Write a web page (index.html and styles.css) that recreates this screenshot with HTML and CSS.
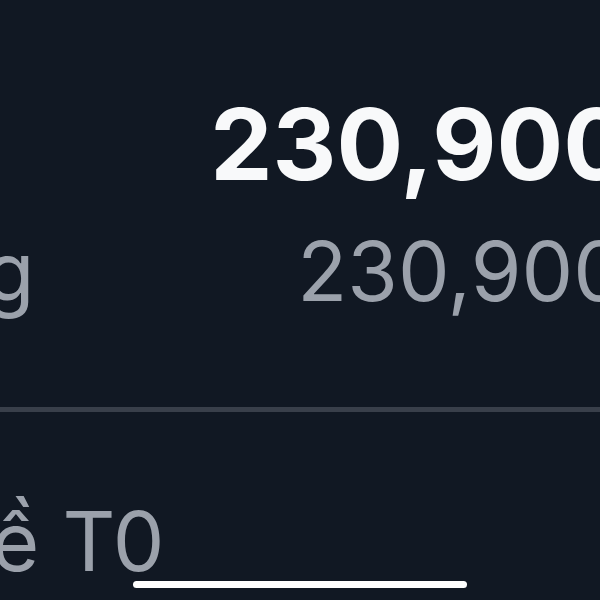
FILE: index.html
```html
<!DOCTYPE html>
<html lang="vi">
<head>
<meta charset="utf-8">
<link rel="stylesheet" href="styles.css">
</head>
<body>
<div class="screen">
  <div class="panel">
    <div class="row row-total">
      <span class="amount-main">230,900</span>
    </div>
    <div class="row row-sub">
      <span class="label">Tổng</span>
      <span class="amount-sub">230,900</span>
    </div>
    <div class="divider"></div>
    <div class="row row-t0">
      <span class="label label-t0">Tiền về T0</span>
    </div>
  </div>
  <div class="home-indicator"></div>
</div>
</body>
</html>
```
FILE: styles.css
```css
html, body {
  margin: 0;
  padding: 0;
  background: #111823;
  overflow: hidden;
}
.screen {
  position: relative;
  width: 600px;
  height: 600px;
  overflow: hidden;
  background: #111823;
  font-family: Inter, "Noto Sans", sans-serif;
}
.panel {
  margin-left: -160px;
  margin-right: -25px;
  padding-top: 95px;
  display: flex;
  flex-direction: column;
}
.row {
  display: flex;
  justify-content: space-between;
  align-items: flex-start;
  white-space: nowrap;
}
.row-total {
  justify-content: flex-end;
}
.amount-main {
  margin-right: -5px;
  font-size: 99px;
  line-height: 99px;
  font-weight: 700;
  color: #f8f9fa;
}
.row-sub {
  margin-top: 37px;
}
.label, .amount-sub {
  font-size: 82px;
  line-height: 82px;
  font-weight: 400;
  color: #9ba1ab;
}
.label-t0 {
  margin-left: -85px;
}
.divider {
  margin-top: 94px;
  height: 5px;
  background: #393f4a;
}
.row-t0 {
  margin-top: 89px;
}
.home-indicator {
  position: absolute;
  left: 133px;
  top: 581px;
  width: 334px;
  height: 7px;
  border-radius: 4px;
  background: #ffffff;
}
```
